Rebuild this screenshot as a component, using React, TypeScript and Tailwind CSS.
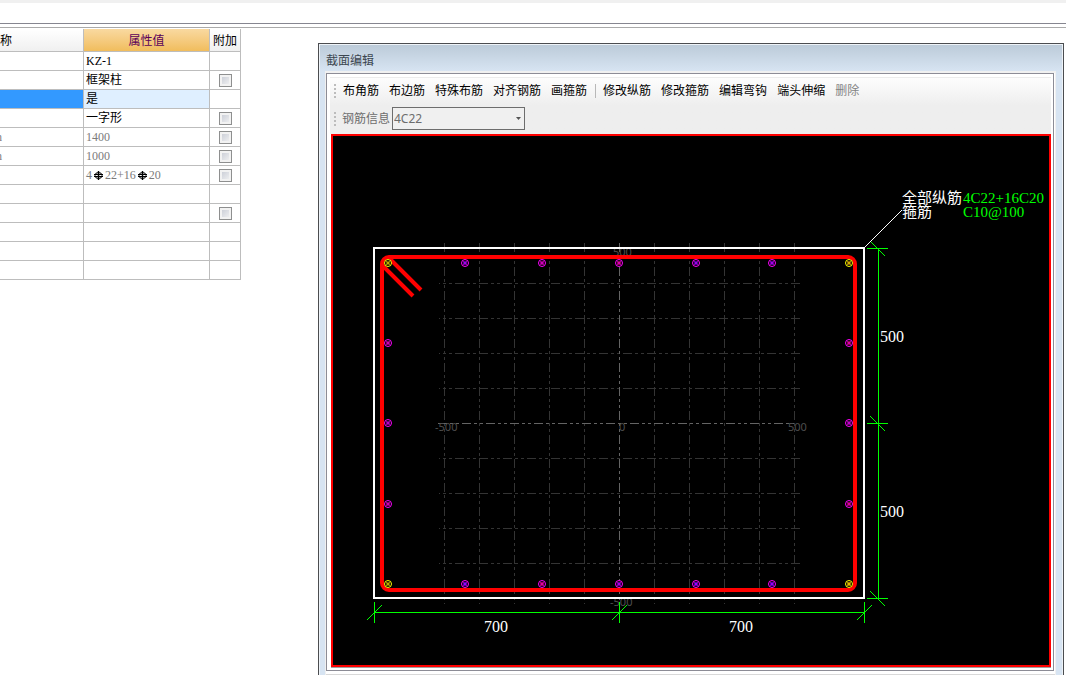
import React from "react";

type Row = { unit?: string; value?: React.ReactNode; extra?: boolean; tone?: "muted" | "selected" };

const RebarMark = () => (
  <svg className="mx-[2px] inline-block size-[9px] align-[-1px]" viewBox="0 0 9 9" fill="none" stroke="#000">
    <ellipse cx="4.5" cy="4.5" rx="3.5" ry="3" />
    <path d="M0 3.5H9M0 5.5H9" />
    <path d="M4.500 0V9" strokeWidth="1.4" />
  </svg>
);

const rows: Row[] = [
  { value: "KZ-1" },
  { value: "框架柱", extra: true },
  { value: "是", tone: "selected" },
  { value: "一字形", extra: true },
  { unit: "m", value: "1400", extra: true, tone: "muted" },
  { unit: "m", value: "1000", extra: true, tone: "muted" },
  { value: <>4<RebarMark />22+16<RebarMark />20</>, extra: true, tone: "muted" },
  {},
  { extra: true },
  {},
  {},
  {},
];

function PropertyTable() {
  return (
    <div className="flex w-[241px] shrink-0 items-start justify-end overflow-hidden pt-px">
      <table className="w-[261px] shrink-0 table-fixed border-separate border-spacing-0 text-[12px] leading-[18px] font-['Liberation_Serif','Noto_Sans_CJK_SC',serif]">
        <colgroup>
          <col className="w-[104px]" />
          <col className="w-[126px]" />
          <col className="w-[31px]" />
        </colgroup>
        <thead>
          <tr className="h-[23px]">
            <th className="border-r border-b border-[#bdbdbd] bg-linear-to-b from-white to-[#f0f0f0] p-0 pt-[2px] pr-[71px] text-right font-normal">称</th>
            <th className="border-r border-b border-[#bdbdbd] bg-linear-to-b from-[#f9d9a0] to-[#f1bd5c] p-0 pt-[2px] text-center font-normal text-[#5a005a]">属性值</th>
            <th className="border-r border-b border-[#bdbdbd] bg-linear-to-b from-white to-[#f0f0f0] p-0 pt-[2px] text-center font-normal">附加</th>
          </tr>
        </thead>
        <tbody>
          {rows.map((r, i) => {
            const selected = r.tone === "selected";
            return (
              <tr key={i} className={r.tone === "muted" ? "h-[19px] text-[#7b7b7b]" : "h-[19px] text-black"}>
                <td className={`border-r border-b border-[#bdbdbd] p-0 pr-[81px] text-right ${selected ? "bg-[#3399ff]" : ""}`}>{r.unit}</td>
                <td className={`border-r border-b border-[#bdbdbd] p-0 pl-[2px] whitespace-nowrap ${selected ? "bg-[#dfefff]" : ""}`}>
                  <div className="h-[18px]">{r.value}</div>
                </td>
                <td className="border-r border-b border-[#bdbdbd] p-0">
                  {r.extra && (
                    <input
                      type="checkbox"
                      aria-label="附加"
                      className="mx-auto block size-[13px] appearance-none border border-[#8e8f8f] bg-linear-to-br from-[#c4c8d2] to-[#f6f6f6] shadow-[inset_0_0_0_2px_#f2f2f2]"
                    />
                  )}
                </td>
              </tr>
            );
          })}
        </tbody>
      </table>
    </div>
  );
}

const Grip = () => (
  <span aria-hidden className="flex w-[2px] flex-col gap-[2px]">
    <i className="h-[2px] bg-[#bcbcbc]" />
    <i className="h-[2px] bg-[#bcbcbc]" />
    <i className="h-[2px] bg-[#bcbcbc]" />
    <i className="h-[2px] bg-[#bcbcbc]" />
  </span>
);

const placeTools = ["布角筋", "布边筋", "特殊布筋", "对齐钢筋", "画箍筋"];
const editTools = ["修改纵筋", "修改箍筋", "编辑弯钩", "端头伸缩"];

function Toolbar() {
  return (
    <div className="flex h-[57px] flex-col border-t border-[#ececec] bg-linear-to-b from-[#fdfdfd] to-[#eeeeee] to-50% pl-[4px]">
      <div className="flex h-[26px] items-center whitespace-nowrap">
        <Grip />
        <div className="ml-[7px] flex gap-[10px]">
          {placeTools.map((t) => (
            <button key={t} type="button">{t}</button>
          ))}
        </div>
        <span className="mr-[7px] ml-[8px] h-[14px] w-px bg-[#b8b8b8]" />
        <div className="flex gap-[10px]">
          {editTools.map((t) => (
            <button key={t} type="button">{t}</button>
          ))}
          <button type="button" disabled className="text-[#838383]">删除</button>
        </div>
      </div>
      <div className="flex h-[29px] items-center text-[#6d6d6d]">
        <Grip />
        <label htmlFor="bar-info" className="ml-[6px] w-[50px] whitespace-nowrap">钢筋信息</label>
        <div className="relative">
          <select id="bar-info" className="block h-[23px] w-[133px] appearance-none border border-[#6d6d6d] bg-[#f0f0f0] pl-px">
            <option>4C22</option>
          </select>
          <svg className="pointer-events-none absolute top-[10px] right-[4px]" width="5" height="3" viewBox="0 0 5 3">
            <path d="M0 0h5L2.5 3z" fill="#555" />
          </svg>
        </div>
      </div>
    </div>
  );
}

const gridX = [-175, -140, -105, -70, -35, 35, 70, 105, 140, 175];
const gridY = [-140, -105, -70, -35, 35, 70, 105, 140];

type Bar = { x: number; y: number; ring: string; core: string };
const M = "#ff00ff";
const Y = "#ffff00";
const bars: Bar[] = [
  { x: -231, y: -160, ring: Y, core: "#806000" },
  { x: -154, y: -160, ring: M, core: "#6000c0" },
  { x: -77, y: -160, ring: M, core: "#a00080" },
  { x: 0, y: -160, ring: M, core: "#b00060" },
  { x: 77, y: -160, ring: M, core: "#5000c0" },
  { x: 153, y: -160, ring: M, core: "#6000c0" },
  { x: 230, y: -160, ring: Y, core: "#a06000" },
  { x: -231, y: -80, ring: M, core: "#a00070" },
  { x: 230, y: -80, ring: M, core: "#b00050" },
  { x: -231, y: 0, ring: M, core: "#800090" },
  { x: 230, y: 0, ring: M, core: "#800090" },
  { x: -231, y: 81, ring: M, core: "#a00070" },
  { x: 230, y: 81, ring: M, core: "#b00050" },
  { x: -231, y: 161, ring: Y, core: "#806000" },
  { x: -154, y: 161, ring: M, core: "#5000e0" },
  { x: -77, y: 161, ring: M, core: "#c00060" },
  { x: 0, y: 161, ring: M, core: "#6000c0" },
  { x: 77, y: 161, ring: M, core: "#5000e0" },
  { x: 153, y: 161, ring: M, core: "#5000e0" },
  { x: 230, y: 161, ring: Y, core: "#c08000" },
];

function SectionDrawing() {
  return (
    <svg width="716" height="529" viewBox="0 0 716 529" className="block font-['Liberation_Serif','Noto_Sans_CJK_SC',serif]">
      <g transform="translate(286 287)" fill="none">
        <g stroke="#343434" shapeRendering="crispEdges" strokeDasharray="9 3 3 3 3 3">
          {gridX.map((x) => <path key={x} d={`M${x + 0.5} -180V181`} />)}
          {gridY.map((y) => <path key={y} d={`M-180 ${y + 0.5}H181`} strokeDashoffset="8" />)}
          <path d="M-181 0.5H175M0.5 -180V181" stroke="#646464" />
        </g>
        <g fill="#4e4e4e" fontSize="11" className="font-['Noto_Sans',sans-serif]">
          <text x="-6" y="-167">500</text>
          <text x="-184" y="8">-500</text>
          <text x="0" y="8">0</text>
          <text x="169" y="8">500</text>
          <text x="-9" y="183">-500</text>
        </g>
        <rect x="-245" y="-175" width="490" height="350" stroke="#fff" strokeWidth="2" />
        <rect x="-237" y="-166" width="473" height="333" rx="7" stroke="#f00" strokeWidth="4" />
        <path d="M-229 -164L-198 -133M-237 -158L-206 -127" stroke="#f00" strokeWidth="4" />
        {bars.map((b) => (
          <g key={`${b.x},${b.y}`} transform={`translate(${b.x} ${b.y})`} stroke={b.ring}>
            <circle r="3.5" fill="#000" />
            <circle r="2" fill={b.core} stroke="none" />
            <path d="M-2.500 -2.500L2.500 2.500M2.500 -2.500L-2.500 2.500" strokeWidth="0.7" strokeOpacity="0.7" />
          </g>
        ))}
        <g stroke="#0f0" shapeRendering="crispEdges">
          <path d="M259.500 -175V175M248 -174.500H269M248 0.500H269M248 175.500H269" />
          <path d="M251 -182L266 -167M251 -7L266 8M251 168L266 183" />
          <path d="M-245 189.500H245M-244.500 179V200M0.500 179V200M245.500 179V200" />
          <path d="M-252 197L-237 182M-7 197L8 182M238 197L253 182" />
        </g>
        <path d="M245.500 -175.500L282.500 -212.500" stroke="#fff" shapeRendering="crispEdges" />
        <g fill="#fff" fontSize="16">
          <text x="261" y="-81">500</text>
          <text x="261" y="94">500</text>
          <text x="-135" y="209">700</text>
          <text x="110" y="209">700</text>
          <text x="283" y="-220" fontSize="15">全部纵筋</text>
          <text x="283" y="-206" fontSize="15">箍筋</text>
        </g>
        <g fill="#0f0" fontSize="15">
          <text x="344" y="-220">4C22+16C20</text>
          <text x="344" y="-206">C10@100</text>
        </g>
      </g>
    </svg>
  );
}

function SectionEditor() {
  return (
    <section className="mt-[15px] mr-[2px] ml-[77px] flex min-w-0 flex-1 flex-col border border-b-0 border-[#4b4d50] bg-[#d7e4f2] text-[12px] leading-[18px] font-['Noto_Sans','Noto_Sans_CJK_SC',sans-serif]">
      <div className="flex flex-1 flex-col border-x border-t border-[#eef3f8]">
        <h1 className="flex h-[26px] items-center bg-linear-to-b from-[#bccbd9] to-[#d7e4f2] pt-[6px] pl-[6px] text-[#3c4650]">截面编辑</h1>
        <div className="mr-[6px] ml-[5px] flex flex-1 flex-col border-x border-t-2 border-[#f0f0f0] bg-white">
          <div className="mr-px flex flex-1 flex-col border border-[#8c8c96] bg-white pt-[3px] pr-[2px] pb-[2px] pl-[3px]">
            <Toolbar />
            <div className="ml-px flex-1 border-b border-[#a0a0a0] bg-white">
              <div className="h-full overflow-hidden border-2 border-[#ff0000] bg-black">
                <SectionDrawing />
              </div>
            </div>
          </div>
          <div className="mt-[3px] h-px bg-[#d9d9d9]" />
        </div>
      </div>
    </section>
  );
}

export default function App() {
  return (
    <div className="flex min-h-screen flex-col bg-white text-black">
      <div className="h-[3px] bg-[#f0f0f0]" />
      <div className="mt-[20px] h-[5px] border-t border-b border-t-[#868690] border-b-[#aaaaaa]" />
      <main className="flex flex-1 items-stretch">
        <PropertyTable />
        <SectionEditor />
      </main>
    </div>
  );
}
